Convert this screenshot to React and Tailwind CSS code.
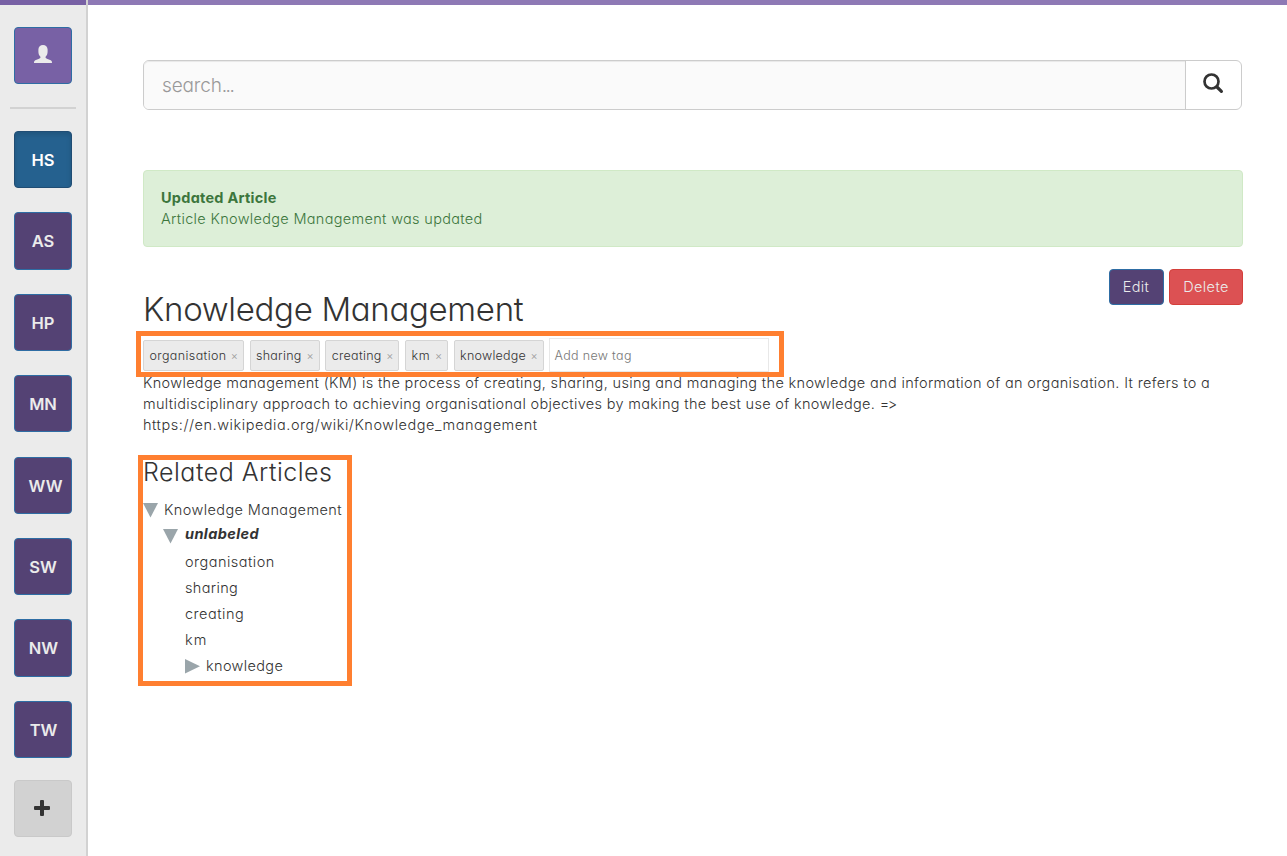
const spaces = [
  { label: "HS", active: true },
  { label: "AS" },
  { label: "HP" },
  { label: "MN" },
  { label: "WW", cls: "pl-[5px]" },
  { label: "SW" },
  { label: "NW", cls: "pl-[1px]" },
  { label: "TW", cls: "pl-[1px]" },
];

const tags = [
  { label: "organisation", cls: "w-[101px]", text: "tracking-[0.38px]" },
  { label: "sharing", cls: "w-[70.2px]", text: "tracking-[0.25px]" },
  { label: "creating", cls: "w-[74.2px]", text: "tracking-[0.3px]" },
  { label: "km", cls: "w-[43.2px]", text: "tracking-[0.7px]" },
  { label: "knowledge", cls: "w-[90px]", text: "tracking-[0.25px]" },
];

const leaves = [
  { label: "organisation", cls: "tracking-[0.48px]" },
  { label: "sharing", cls: "tracking-[0.33px]" },
  { label: "creating", cls: "tracking-[0.5px]" },
  { label: "km", cls: "tracking-[1px]" },
];

const UserIcon = () => (
  <svg width="18" height="18" viewBox="0 0 18 18" fill="currentColor">
    <path d="M9 0C6.300 0 4.400 1.700 4.400 4.600v2.200c0 2.200.8 3.800 2 5 .2 1-.2 1.500-1.300 1.900L1.300 15.200C.3 15.700 0 16.500 0 18h18c0-1.500-.3-2.300-1.300-2.800l-3.800-1.500c-1.100-.4-1.500-.9-1.300-1.900 1.200-1.200 2-2.800 2-5V4.600C13.600 1.700 11.700 0 9 0z" />
  </svg>
);

const SearchIcon = () => (
  <svg width="21" height="21" viewBox="0 0 21 21" fill="none" stroke="currentColor">
    <circle cx="8.500" cy="8.500" r="7" strokeWidth="2.700" />
    <path d="M14 14l4.400 4.300" strokeWidth="3.200" strokeLinecap="round" />
  </svg>
);

const Caret = ({ open }) => (
  <svg width="15" height="15" viewBox="0 0 15 15" fill="#9aa5aa" className="shrink-0">
    {open ? <path d="M0 0h15L7.500 14.500z" /> : <path d="M0 0v14.500l15-7.250z" />}
  </svg>
);

export default function App() {
  return (
    <div className="flex h-[856px] w-[1287px] overflow-hidden bg-white font-['Inter','Liberation_Sans',sans-serif] text-[14.5px] font-light text-[#333] [font-feature-settings:'cv11','calt'_0]">
      <aside className="flex w-[88px] shrink-0 flex-col border-r-2 border-[#d2d2d2] bg-[#ebebeb]">
        <div className="h-[5px] w-full shrink-0 bg-[#7861a5]" />
        <div className="flex flex-col items-center">
          <button className="mt-[22px] flex h-[57px] w-[58px] shrink-0 items-center justify-center rounded-[4px] border border-[#2e6da4] bg-[#7861a5] pb-[3px] text-[#ebebeb]">
            <UserIcon />
          </button>
          <div className="mt-[23px] h-[2px] w-[66px] shrink-0 bg-[#d2d2d2]" />
          <nav className="mt-[22px] flex flex-col gap-[24.1px]">
            {spaces.map((s) => (
              <button
                key={s.label}
                className={`flex h-[57.3px] w-[58px] items-center justify-center rounded-[4px] border pt-[1.5px] text-[16.5px] font-semibold ${s.active ? "border-[#204d74] bg-[#25618f] text-white shadow-[inset_0_3px_5px_rgba(0,0,0,0.125)]" : "border-[#2e6da4] bg-[#544274] text-[#ebebeb]"} ${s.cls || ""}`}
              >
                {s.label}
              </button>
            ))}
          </nav>
          <button className="mt-[22px] flex h-[57px] w-[58px] shrink-0 items-center justify-center rounded-[4px] border border-[#c9c9c9] bg-[#d2d2d2] pr-[2px] pb-[2px] text-[#333]">
            <svg width="16" height="16" viewBox="0 0 16 16" fill="currentColor">
              <path d="M7 0h2q1 0 1 1v5h5q1 0 1 1v2q0 1-1 1h-5v5q0 1-1 1H7q-1 0-1-1v-5H1q-1 0-1-1V7q0-1 1-1h5V1q0-1 1-1z" />
            </svg>
          </button>
        </div>
      </aside>
      <main className="flex min-w-0 flex-1 flex-col">
        <div className="h-[5px] shrink-0 bg-[#8e79b5]" />
        <div className="relative flex flex-col pt-[55px] pr-[44px] pl-[55px]">
          <div className="mr-px flex h-[50px] rounded-[6px] border border-[#ccc]">
            <div className="flex flex-1 items-center rounded-l-[5px] bg-[#fafafa] pt-[2px] pl-[18px] text-[19px] text-[#999] shadow-[inset_0_1px_1px_rgba(0,0,0,0.075)]">
              <span className="tracking-[-0.15px]">search</span><span className="tracking-[-1.5px]">...</span>
            </div>
            <button className="flex w-[56px] items-center justify-center border-l border-[#ccc] pb-[3px] text-[#333]">
              <SearchIcon />
            </button>
          </div>
          <div className="mt-[60px] flex h-[77px] flex-col items-start rounded-[4px] border border-[#d0e9c6] bg-[#ddefd8] px-[17px] pt-[16px] leading-[21px] text-[#3c763d]">
            <strong className="font-bold tracking-[0.25px]">Updated Article</strong>
            <span className="tracking-[0.32px]">Article Knowledge Management was updated</span>
          </div>
          <div className="mt-[22px] flex h-[61px] justify-between">
            <h1 className="pt-[20px] text-[33px] leading-[40px] tracking-[-0.32px]">Knowledge Management</h1>
            <div className="flex gap-[5px] text-[#ebebeb]">
              <button className="h-[36px] w-[55px] rounded-[4px] border border-[#2e6da4] bg-[#544274] pr-px tracking-[0.4px]">Edit</button>
              <button className="h-[36px] w-[74px] rounded-[4px] border border-[#d43f3a] bg-[#dc5153] tracking-[0.4px]">Delete</button>
            </div>
          </div>
          <div className="mt-[8px] flex h-[34px] items-center gap-[5.5px] text-[12.5px]">
            {tags.map((t) => (
              <span key={t.label} className={`flex h-[31px] shrink-0 items-center justify-between rounded-[2px] border border-[#d5d5d5] bg-[#ebebeb] pr-[6px] pl-[5.5px] pt-[2px] ${t.cls}`}>
                <span className={t.text}>{t.label}</span>
                <span className="-mr-px pt-px text-[11px] text-[#999]">×</span>
              </span>
            ))}
            <div className="-ml-[0.5px] flex h-[34px] w-[220px] items-center border border-[#e8e8e8] pt-[2px] pl-[5px] tracking-[0.32px] text-[#777]">Add new tag</div>
          </div>
          <div className="flex flex-col items-start leading-[21px] whitespace-nowrap">
            <span className="tracking-[0.337px]">Knowledge management (KM) is the process of creating, sharing, using and managing the knowledge and information of an organisation. It refers to a</span>
            <span><span className="tracking-[0.32px]">multidisciplinary approach to achieving organisational objectives by making the best use of knowledge. </span><span className="tracking-[-1.5px]">=&gt;</span></span>
            <span className="tracking-[0.54px]">https://en.wikipedia.org/wiki/Knowledge_management</span>
          </div>
          <h2 className="mt-[21px] text-[25px] leading-[32px] tracking-[0.5px]">Related Articles</h2>
          <div className="mt-[9px] flex flex-col items-start">
            <div className="flex h-[26px] items-center gap-[6px] tracking-[0.4px]"><Caret open />Knowledge Management</div>
            <div className="flex h-[26px] items-center gap-[7px] pl-[20px]"><Caret open /><span className="-mt-[4px] font-bold tracking-[0.4px] italic">unlabeled</span></div>
            {leaves.map((l) => (
              <div key={l.label} className={`flex h-[26px] items-center pl-[42px] ${l.cls}`}>{l.label}</div>
            ))}
            <div className="flex h-[26px] items-center gap-[6px] pl-[42px] tracking-[0.35px]"><Caret />knowledge</div>
          </div>
          <div className="pointer-events-none absolute top-[326px] left-[48px] h-[46px] w-[648px] border-[5px] border-[#ff7f30]" />
          <div className="pointer-events-none absolute top-[449.5px] left-[50px] h-[231px] w-[214px] border-[5px] border-[#ff7f30]" />
        </div>
      </main>
    </div>
  );
}
